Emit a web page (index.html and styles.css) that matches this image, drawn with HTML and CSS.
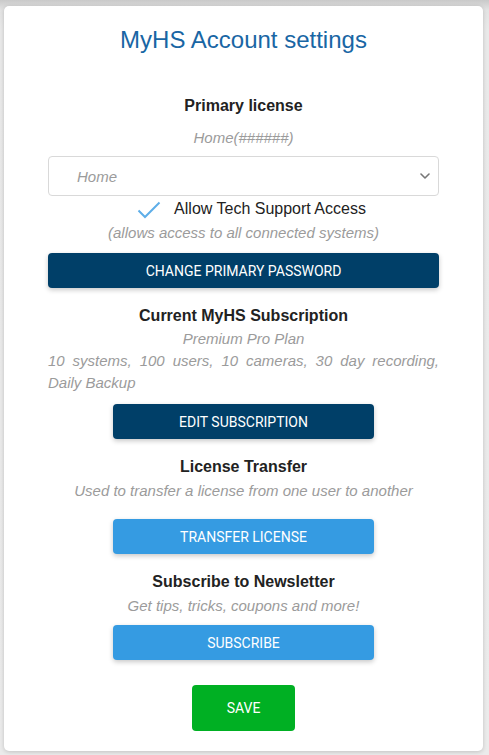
FILE: index.html
```html
<!DOCTYPE html>
<html lang="en">
<head>
<meta charset="utf-8">
<title>MyHS Account settings</title>
<link rel="stylesheet" href="styles.css">
</head>
<body>
<div class="card">
  <h1 class="title">MyHS Account settings</h1>

  <section class="sec sec-primary">
    <h2 class="heading">Primary license</h2>
    <p class="note note-id">Home(######)</p>
    <div class="select">
      <span class="select-value">Home</span>
      <svg class="chev" width="10" height="6" viewBox="0 0 10 6"><path d="M1 1l4 4 4-4" fill="none" stroke="#777" stroke-width="1.6" stroke-linecap="round" stroke-linejoin="round"/></svg>
    </div>
    <div class="check-row">
      <svg class="check" width="24" height="18" viewBox="0 0 24 18"><path d="M1.5 9.5l6.5 6.5L22.5 1.5" fill="none" stroke="#5eaee8" stroke-width="2"/></svg>
      <span class="check-label">Allow Tech Support Access</span>
    </div>
    <p class="note note-allow">(allows access to all connected systems)</p>
    <button class="btn btn-dark btn-full">CHANGE PRIMARY PASSWORD</button>
  </section>

  <section class="sec sec-sub">
    <h2 class="heading">Current MyHS Subscription</h2>
    <p class="note note-plan">Premium Pro Plan</p>
    <p class="note note-justify">10 systems, 100 users, 10 cameras, 30 day recording, Daily Backup</p>
    <button class="btn btn-dark btn-mid">EDIT SUBSCRIPTION</button>
  </section>

  <section class="sec sec-transfer">
    <h2 class="heading">License Transfer</h2>
    <p class="note">Used to transfer a license from one user to another</p>
    <button class="btn btn-light btn-mid btn-transfer">TRANSFER LICENSE</button>
  </section>

  <section class="sec sec-news">
    <h2 class="heading">Subscribe to Newsletter</h2>
    <p class="note">Get tips, tricks, coupons and more!</p>
    <button class="btn btn-light btn-mid btn-subscribe">SUBSCRIBE</button>
  </section>

  <button class="btn btn-save">SAVE</button>
</div>
</body>
</html>
```

FILE: styles.css
```css
html, body {
  margin: 0;
  height: 100%;
}
body {
  background: linear-gradient(#c9c9c9 0px, #e3e3e3 10px, #e9e9e9 30px, #ebebeb 100%);
  padding: 6px 6px 0 4px;
  box-sizing: border-box;
  font-family: "Liberation Sans", Arial, sans-serif;
}
.card {
  background: #fff;
  border-radius: 5px;
  box-shadow: 0 1px 4px rgba(0,0,0,0.18);
  padding: 21px 44px 20px;
  display: flex;
  flex-direction: column;
  align-items: center;
  height: 745px;
  box-sizing: border-box;
}
.title {
  margin: 0;
  font-weight: normal;
  font-size: 24px;
  line-height: 26px;
  color: #1966a4;
}
.sec {
  width: 100%;
  display: flex;
  flex-direction: column;
  align-items: center;
}
.heading {
  margin: 0;
  font-size: 16px;
  line-height: 20px;
  font-weight: bold;
  color: #222;
}
.note {
  margin: 0;
  font-size: 15px;
  line-height: 22px;
  font-style: italic;
  color: #9b9b9b;
  text-align: center;
}
.note-justify {
  align-self: stretch;
  text-align: justify;
}
.sec-primary { margin-top: 43px; }
.note-id { margin-top: 12px; line-height: 20px; }
.select {
  margin-top: 8px;
  align-self: stretch;
  height: 40px;
  box-sizing: border-box;
  border: 1px solid #d9d9d9;
  border-radius: 4px;
  display: flex;
  align-items: center;
  justify-content: space-between;
  padding: 0 8px 0 28px;
}
.select-value {
  font-size: 15px;
  font-style: italic;
  color: #9b9b9b;
}
.chev { display: block; }
.check-row {
  margin-top: 3px;
  display: flex;
  align-items: center;
  height: 20px;
  padding-left: 16px;
}
.check { display: block; margin-right: 13px; margin-top: 1px; }
.check-label {
  font-size: 16px;
  color: #222;
}
.note-allow { margin-top: 3px; line-height: 22px; }
.btn {
  border: none;
  font-family: Roboto, "Liberation Sans", Arial, sans-serif;
  font-size: 14px;
  color: #fff;
  border-radius: 4px;
  box-shadow: 0 2px 5px rgba(0,0,0,0.22);
  padding: 0;
  cursor: pointer;
}
.btn-dark { background: #003f68; }
.btn-light { background: #359be2; }
.btn-full {
  align-self: stretch;
  height: 35px;
  margin-top: 9px;
}
.btn-mid {
  width: 261px;
  height: 35px;
}
.sec-sub { margin-top: 18px; }
.note-plan { margin-top: 2px; }
.sec-sub .btn-mid { margin-top: 10px; }
.sec-transfer { margin-top: 18px; }
.sec-transfer .note { margin-top: 3px; }
.btn-transfer { margin-top: 17px; }
.sec-news { margin-top: 18px; }
.sec-news .note { margin-top: 3px; }
.btn-subscribe { margin-top: 8px; }
.btn-save {
  margin-top: 25px;
  width: 103px;
  height: 46px;
  background: #00b023;
  box-shadow: none;
}
```
